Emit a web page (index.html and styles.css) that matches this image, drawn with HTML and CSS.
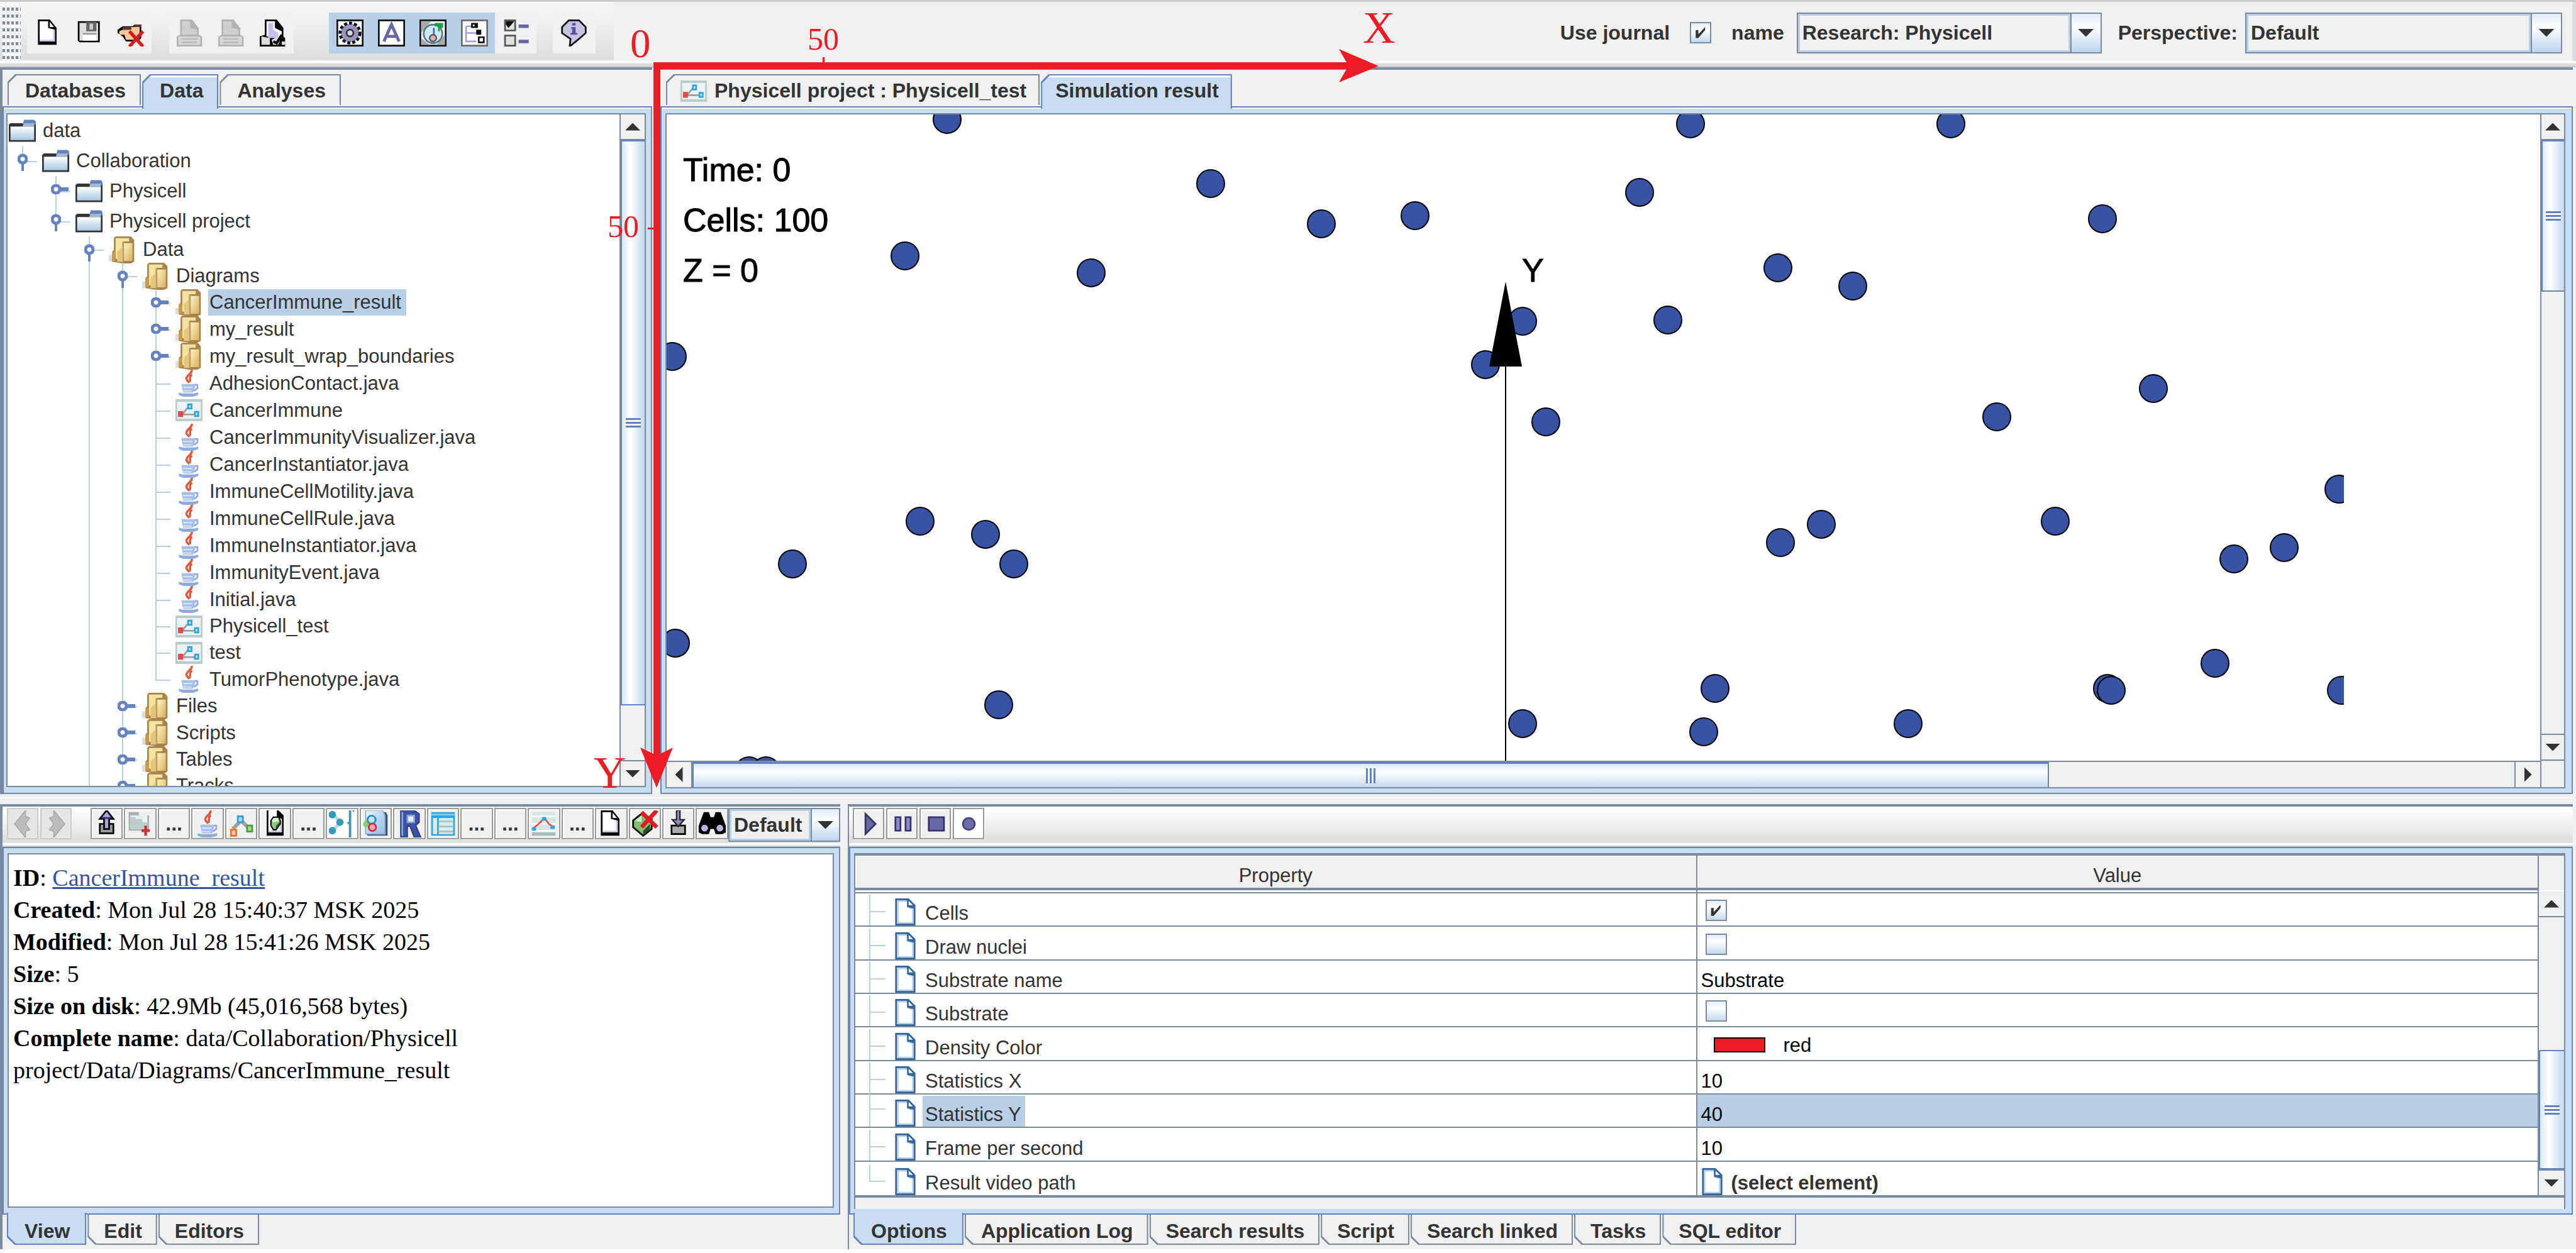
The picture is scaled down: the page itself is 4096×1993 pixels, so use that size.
FILE: index.html
```html
<!DOCTYPE html>
<html lang="en">
<head>
<meta charset="utf-8">
<title>Research: Physicell</title>
<link rel="stylesheet" href="styles.css">
</head>
<body>
<svg class="defs" aria-hidden="true">
  <defs>
    <linearGradient id="gold" x1="0" y1="0" x2="1" y2="1"><stop offset="0" stop-color="#fdf3c0"/><stop offset="1" stop-color="#d9b060"/></linearGradient>
    <linearGradient id="sky" x1="0" y1="0" x2="0" y2="1"><stop offset="0" stop-color="#ffffff"/><stop offset="1" stop-color="#a9c8e4"/></linearGradient>
    <linearGradient id="img" x1="0" y1="0" x2="1" y2="1"><stop offset="0" stop-color="#e8f3fc"/><stop offset="1" stop-color="#8dbce6"/></linearGradient>
  </defs>
  <symbol id="i-new" viewBox="0 0 16 16"><path d="M2 0H9L13 5V15H2Z" fill="#000"/><path d="M3 1H8V5L12 6V13H3Z" fill="#fff"/><path d="M11 6h1v7H3v-1h8Z" fill="#c9c7e6"/><path d="M9 1.500v3h2.500Z" fill="#fff"/></symbol>
  <symbol id="i-save" viewBox="0 0 16 16"><path d="M1 1h13v12.500H2L1 12.500Z" fill="#000"/><path d="M2 2h11v10.500H2Z" fill="#ddd"/><path d="M6 1.500h6V7H6Z" fill="#666"/><path d="M8 2.500h2v3.500H8Z" fill="#ccc"/><path d="M4 8h8v1H4Z" fill="#999"/><path d="M4 9h8v3.500H4Z" fill="#fff"/></symbol>
  <symbol id="i-trash" viewBox="0 0 16 16"><path d="M3 4h6l1-1h4v8l-2 2H5L3 10 0 8V6Z" fill="#000"/><path d="M4 4.500h6V3.500h3V11l-2 1H5L4 9H1V7l2-1h5V5Z" fill="#fdc796"/><path d="M3 4.500h5v1.500H3ZM10 3h4v1.500h-4Z" fill="#633"/><path d="M7 7l8 9M15 7l-8 9" stroke="#d61a20" stroke-width="2"/></symbol>
  <symbol id="i-print" viewBox="0 0 16 16"><path d="M2 0h7l4 5v4l2 1v6H0v-6l2-1Z" fill="#b3b3b3"/><path d="M3 1h5v4l4 1v3H3Z" fill="#cfcfcf"/><path d="M1 10h13v5H1Z" fill="#d6d6d6"/><path d="M3 11.500h9M3 13.500h9" stroke="#bbb"/></symbol>
  <symbol id="i-page" viewBox="0 0 16 16"><path d="M3 0h7l4 5v5l1 1v5H0v-6l3-1Z" fill="#000"/><path d="M4 1h5v4l4 2v4l-9-1Z" fill="#fff"/><path d="M5 2h3v4l3 2v3H5Z" fill="#c4c2e8"/><path d="M1 10l5 1v4H1ZM7 12l6-3-2 6H8ZM13 13h2v2h-2Z" fill="#ddd"/><path d="M8 13l2 1 3-5" stroke="#000" stroke-width="1.500" fill="none"/></symbol>
  <symbol id="i-gear" viewBox="0 0 16 16"><path d="M0 0h16v16H0Z" fill="#111"/><path d="M1 1h14v14H1Z" fill="#fff"/><circle cx="8" cy="8" r="5.500" fill="#9795bd" stroke="#111" stroke-width="2.500" stroke-dasharray="1.700 1.100"/><circle cx="8" cy="8" r="5" fill="#9795bd"/><circle cx="8" cy="8" r="2" fill="#d9d8ee" stroke="#333"/></symbol>
  <symbol id="i-text" viewBox="0 0 16 16"><path d="M0 0h16v16H0Z" fill="#111"/><path d="M1 1h14v14H1Z" fill="#fff"/><path d="M3.500 13L8 3l4.500 10M5.500 10h5" stroke="#6866a3" stroke-width="1.800" fill="none"/></symbol>
  <symbol id="i-dna" viewBox="0 0 16 16"><path d="M0 0h16v16H0Z" fill="#111"/><path d="M1 1h14v14H1Z" fill="#fff"/><path d="M1 1h6L1 8ZM10 15h5V9ZM1 11v4h5Z" fill="#aaa"/><circle cx="8" cy="8.500" r="5.500" fill="#cceaf2" stroke="#578" stroke-width="1"/><path d="M9 2h5v3h-2v2h-1V4H9Z" fill="#1aa04a"/><path d="M8 5h1v5H8Z" fill="#3a64b0"/><circle cx="8" cy="11" r="2" fill="#f0a7a4" stroke="#456" stroke-width=".8"/></symbol>
  <symbol id="i-tree" viewBox="0 0 16 16"><path d="M0 0h16v16H0Z" fill="#6a6a6a"/><path d="M1 1h14v14H1Z" fill="#fff"/><path d="M3 4v9h6M3 8h6M3 4h4" stroke="#a3a1d5" fill="none"/><path d="M6 2h4v3H6ZM9 6h3v3H9ZM10 10h4v4h-4Z" fill="#111"/><path d="M7 3h1v1H7ZM11 11h2v2h-2Z" fill="#fff"/></symbol>
  <symbol id="i-list" viewBox="0 0 16 16"><path d="M1 0h7v7H1ZM1 9h7v7H1Z" fill="#555"/><path d="M2 1h5v5H2ZM2 10h5v5H2Z" fill="#dfe3df"/><path d="M2 1h5L3.500 5 2 3Z" fill="#111"/><path d="M9.500 3h6v2h-6ZM9.500 12h6v2h-6Z" fill="#6866a3"/></symbol>
  <symbol id="i-info" viewBox="0 0 16 16"><path d="M5 .5h6l4 4v3.500l-4 3.500-5.500 4.500.5-4.500L1 8V4.500Z" fill="#c5c3e0" stroke="#111" stroke-width="1"/><path d="M7 2h2v1.500H7ZM6.500 4.500H9V8h1v1H6V8h1V5.500h-.5Z" fill="#55539a"/></symbol>
  <symbol id="i-left" viewBox="0 0 16 16"><path d="M9.500 0L3 8l6.500 8v-3.500l2.500-1L9.500 8 12 4.500 9.500 3.500Z" fill="#bcbcbc" stroke="#aaa" stroke-width=".6"/></symbol>
  <symbol id="i-right" viewBox="0 0 16 16"><path d="M6.500 0L13 8l-6.500 8v-3.500L4 11.500 6.500 8 4 4.500l2.500-1Z" fill="#bcbcbc" stroke="#aaa" stroke-width=".6"/></symbol>
  <symbol id="i-up" viewBox="0 0 16 16"><path d="M4 8h8v5.500H4Z" fill="#999" stroke="#000"/><path d="M8 0l4 5H9.500v6h-3V5H4Z" fill="#a8a6d8" stroke="#000"/><path d="M5 4.500h6" stroke="#33306a" stroke-width="1"/></symbol>
  <symbol id="i-folder-add" viewBox="0 0 16 16"><path d="M1 1h6v2h6v9H1Z" fill="#a5b1b1"/><path d="M2 3h10v8H2Z" fill="#e9f0f0"/><path d="M2 4h3v1h4v2h3v4H2Z" fill="#bfcccc"/><path d="M11 9v6M8.500 12h5" stroke="#c93036" stroke-width="1.600"/></symbol>
  <symbol id="i-java" viewBox="0 0 16 16"><path d="M9.500 0C10.500 2 6 3.500 6.500 5.500 6.700 6.500 8 7 7.500 7.800M9.800 3C7.500 4.500 9.500 5.500 8.300 7.300" stroke="#e0573c" stroke-width="1.300" fill="none"/><path d="M3.500 8.500h8v2l-1 3h-6Z" fill="#a5bfe8"/><path d="M11.500 9h1.500v2l-2 1.500" stroke="#8faadb" fill="none"/><path d="M2 13.500l2 .5h7l2.500-.5v1.500l-3 1h-6l-2.500-1Z" fill="#8faadb"/><path d="M4.500 10.500h5.500M4.500 12.500h5" stroke="#dfe8f6" stroke-width=".7"/></symbol>
  <symbol id="i-graph" viewBox="0 0 16 16"><path d="M3 11l5-5 5 5" stroke="#97a3a3" stroke-width="2.200" fill="none"/><path d="M6 3.500h3v3.500H6Z" fill="#a9dcf2" stroke="#2a9fd8"/><path d="M2 11.500h3v3.500H2Z" fill="#fbd3ba" stroke="#f06a24"/><path d="M11.500 9h3v3.500h-3Z" fill="#a9d77c" stroke="#3aa04a"/></symbol>
  <symbol id="i-docflask" viewBox="0 0 16 16"><path d="M3 0h7l3 3v12H3Z" fill="#000"/><path d="M4 0h5v4l3 1v8H4Z" fill="#fff"/><path d="M11 6h1v7H4v-1h7Z" fill="#c9c7e6"/><path d="M5.500 6L7 4h3l1 2v2L8.500 11.500H7L5.500 9Z" fill="#8cc97c" stroke="#000" stroke-width=".8"/><path d="M6 6l1-1.500h3V6.500L7 7Z" fill="#dcefd6"/><path d="M10.500 7v1.500L8.500 11V9Z" fill="#2b5e2b"/></symbol>
  <symbol id="i-net" viewBox="0 0 16 16"><path d="M-1-1h18v18H-1Z" fill="#fff"/><path d="M3 3l4 4-4 4" stroke="#b5d9e6" stroke-width="2" fill="none"/><circle cx="2" cy="2.500" r="2.200" fill="#349ab9"/><circle cx="6.500" cy="7" r="2.200" fill="#349ab9"/><circle cx="2" cy="12" r="2.200" fill="#349ab9"/><path d="M12.500 0v16M14 0h1M11 7.500h2" stroke="#349ab9" stroke-width="1.400"/></symbol>
  <symbol id="i-img" viewBox="0 0 16 16"><path d="M3 1h11l1 2v12H3Z" fill="#3c5372"/><path d="M2 0h10l1.500 3v11H2Z" fill="url(#img)" stroke="#8aa8c8" stroke-width=".6"/><circle cx="2.500" cy="8" r="2" fill="#8fcf6a"/><circle cx="5.500" cy="5.500" r="2.400" fill="#bfe3f7" stroke="#1e90d2"/><circle cx="6" cy="10" r="2.200" fill="#f2a7b0" stroke="#d42a40"/></symbol>
  <symbol id="i-r" viewBox="0 0 16 16"><path d="M3 0h8l3 2v5l-2 2 3 7h-4L8.500 9.500H7V16H3Z" fill="#3a53a4" stroke="#27357e" stroke-width=".6"/><path d="M4 1v14M7 3h4v4H7Z" stroke="#86a5dc" stroke-width="1" fill="#eee"/></symbol>
  <symbol id="i-table" viewBox="0 0 16 16"><path d="M1 1h14v14H1Z" fill="#2aa5df"/><path d="M2 4.500h2.500V14H2ZM5.500 4.500H14V14H5.500Z" fill="#d8eaee"/><path d="M5.500 6.500H14M5.500 9.500H14M5.500 12.500H14" stroke="#a9c2c2"/><path d="M1 2.500h14" stroke="#8ad0ee"/></symbol>
  <symbol id="i-plot" viewBox="0 0 16 16"><path d="M1 1h14v14H1Z" fill="#d6e6e6"/><path d="M1 3.500h14M1 8h14M1 12h14" stroke="#fff"/><path d="M1 14h14" stroke="#a9bcbc" stroke-width="2"/><path d="M2 10.500L5 8l3.500-3.500L11 8l3 2" stroke="#f04a3c" fill="none"/><path d="M1 10h2.500v2H1ZM7 4h2.500v2H7ZM12 9h2.500v2H12Z" fill="#2aa5df"/></symbol>
  <symbol id="i-flaskx" viewBox="0 0 16 16"><path d="M1 6l5-4 6 3v6l-5 4-6-5Z" fill="#7fbf70" stroke="#000"/><path d="M7 12l4-4v3l-4 4Z" fill="#245224"/><path d="M2 6l4-3v4Z" fill="#d5efcc"/><path d="M6 1l9 9M15 0L6 10" stroke="#e01c22" stroke-width="2.400"/></symbol>
  <symbol id="i-down" viewBox="0 0 16 16"><path d="M4 9h8v5H4Z" fill="#aaa" stroke="#000"/><path d="M8 9.500L4.500 5.500H7V0h2v5.500h2.500Z" fill="#8c8ac8" stroke="#222" stroke-width=".8"/></symbol>
  <symbol id="i-find" viewBox="0 0 16 16"><path d="M3 1h3l1 3h2l1-3h3l3 8v4l-2 1h-4l-1-3H7l-1 3H2l-2-1V9Z" fill="#000"/><circle cx="3.500" cy="10.500" r="2" fill="#b9b7e2"/><circle cx="12.500" cy="10.500" r="2" fill="#b9b7e2"/></symbol>
  <symbol id="i-disk-folder" viewBox="0 0 16 13"><path d="M9 0h6l1 1v3H8Z" fill="#6382bf"/><path d="M0 3l1-1h7l1 1h7v10H0Z" fill="#333"/><path d="M1 4h14v8H1Z" fill="url(#sky)"/><path d="M9 2h6v2H8Z" fill="#a3b8d0"/></symbol>
  <symbol id="i-folder" viewBox="0 0 16 16"><path d="M0 11h3v4H0Z" fill="#ddd"/><path d="M3 1l1-1h9l2 2v13l-2 1H8l-6-1V9l1-1Z" fill="#a8834a"/><path d="M4 1h8v2H8v12l-4-2Z" fill="#f4e2a0"/><path d="M2 9h2v5.500H2Z" fill="#c79b4a"/><path d="M9 4h5v10.500H9Z" fill="url(#gold)"/><path d="M5 9l3-3v9H5Z" fill="#e3c67c"/><path d="M8.500 3v12" stroke="#c8a264" stroke-width=".6"/></symbol>
  <symbol id="i-diagram" viewBox="0 0 16 13"><path d="M0 0h16v13H0Z" fill="#b9cccb"/><path d="M1 1.500h14v10H1Z" fill="#eaf2f3"/><path d="M4 9l4-5M4 9h8" stroke="#999" fill="none"/><path d="M7 2.500h3V6H7ZM11 7h3v3.500h-3Z" fill="#2aa5df"/><path d="M1.500 7h3v3.500h-3Z" fill="#e8474c"/><path d="M8 3.500h1V5H8ZM12 8h1v1.500h-1Z" fill="#bfe6f7"/></symbol>
  <symbol id="i-leaf" viewBox="0 0 16 16"><path d="M2 0h8l4 4v12H2Z" fill="#31659c"/><path d="M3 1h6v4l4 1v9H3Z" fill="#b8cfe5"/><path d="M4 2h5v3.500l3 1V14H4Z" fill="#fff"/><path d="M10 1.500V4h2.500Z" fill="#fff"/></symbol>
</svg>

<header class="topbar">
  <div class="tools">
    <span class="grip"></span>
    <div class="group">
      <button class="tool" aria-label="New"><svg><use href="#i-new"/></svg></button>
      <button class="tool" aria-label="Save"><svg><use href="#i-save"/></svg></button>
      <button class="tool" aria-label="Remove"><svg><use href="#i-trash"/></svg></button>
    </div>
    <div class="group g2">
      <button class="tool" aria-label="Print" disabled><svg><use href="#i-print"/></svg></button>
      <button class="tool" aria-label="Print preview" disabled><svg><use href="#i-print"/></svg></button>
      <button class="tool" aria-label="Page setup"><svg><use href="#i-page"/></svg></button>
    </div>
    <div class="group g3">
      <button class="tool on" aria-label="Kernel"><svg><use href="#i-gear"/></svg></button>
      <button class="tool on" aria-label="Titles"><svg><use href="#i-text"/></svg></button>
      <button class="tool on" aria-label="Biology"><svg><use href="#i-dna"/></svg></button>
      <button class="tool on" aria-label="Structure"><svg><use href="#i-tree"/></svg></button>
      <button class="tool" aria-label="List"><svg><use href="#i-list"/></svg></button>
    </div>
    <div class="group g4">
      <button class="tool" aria-label="Help"><svg><use href="#i-info"/></svg></button>
    </div>
  </div>
  <form class="session">
    <label for="journal-on">Use journal</label>
    <input class="check" type="checkbox" id="journal-on" checked>
    <label for="journal">name</label>
    <div class="combo journal"><select id="journal"><option>Research: Physicell</option></select><span class="drop"></span></div>
    <label for="perspective">Perspective:</label>
    <div class="combo perspective"><select id="perspective"><option>Default</option></select><span class="drop"></span></div>
  </form>
</header>

<main class="desk">
  <div class="upper">
    <section class="pane repo">
      <nav class="tabs">
        <button class="tab">Databases</button><button class="tab sel">Data</button><button class="tab">Analyses</button>
      </nav>
      <div class="frame">
        <div class="inner row">
          <div class="tree">
            <div class="node big"><svg><use href="#i-disk-folder"/></svg><span>data</span></div>
            <ul>
              <li><div class="node big open"><svg><use href="#i-disk-folder"/></svg><span>Collaboration</span></div>
                <ul>
                  <li><div class="node big closed"><svg><use href="#i-disk-folder"/></svg><span>Physicell</span></div></li>
                  <li><div class="node big open"><svg><use href="#i-disk-folder"/></svg><span>Physicell project</span></div>
                    <ul>
                      <li class="more"><div class="node dir open"><svg><use href="#i-folder"/></svg><span>Data</span></div>
                        <ul>
                          <li><div class="node dir open"><svg><use href="#i-folder"/></svg><span>Diagrams</span></div>
                            <ul>
                              <li><div class="node dir closed"><svg><use href="#i-folder"/></svg><span class="picked">CancerImmune_result</span></div></li>
                              <li><div class="node closed"><svg><use href="#i-folder"/></svg><span>my_result</span></div></li>
                              <li><div class="node closed"><svg><use href="#i-folder"/></svg><span>my_result_wrap_boundaries</span></div></li>
                              <li><div class="node"><svg><use href="#i-java"/></svg><span>AdhesionContact.java</span></div></li>
                              <li><div class="node"><svg><use href="#i-diagram"/></svg><span>CancerImmune</span></div></li>
                              <li><div class="node"><svg><use href="#i-java"/></svg><span>CancerImmunityVisualizer.java</span></div></li>
                              <li><div class="node"><svg><use href="#i-java"/></svg><span>CancerInstantiator.java</span></div></li>
                              <li><div class="node"><svg><use href="#i-java"/></svg><span>ImmuneCellMotility.java</span></div></li>
                              <li><div class="node"><svg><use href="#i-java"/></svg><span>ImmuneCellRule.java</span></div></li>
                              <li><div class="node"><svg><use href="#i-java"/></svg><span>ImmuneInstantiator.java</span></div></li>
                              <li><div class="node"><svg><use href="#i-java"/></svg><span>ImmunityEvent.java</span></div></li>
                              <li><div class="node"><svg><use href="#i-java"/></svg><span>Initial.java</span></div></li>
                              <li><div class="node dir"><svg><use href="#i-diagram"/></svg><span>Physicell_test</span></div></li>
                              <li><div class="node dir"><svg><use href="#i-diagram"/></svg><span>test</span></div></li>
                              <li><div class="node"><svg><use href="#i-java"/></svg><span>TumorPhenotype.java</span></div></li>
                            </ul>
                          </li>
                          <li><div class="node dir closed"><svg><use href="#i-folder"/></svg><span>Files</span></div></li>
                          <li><div class="node closed"><svg><use href="#i-folder"/></svg><span>Scripts</span></div></li>
                          <li><div class="node dir closed"><svg><use href="#i-folder"/></svg><span>Tables</span></div></li>
                          <li><div class="node dir closed"><svg><use href="#i-folder"/></svg><span>Tracks</span></div></li>
                        </ul>
                      </li>
                    </ul>
                  </li>
                </ul>
              </li>
            </ul>
          </div>
          <div class="vbar s-tree"><span class="arrow a-up"></span><span class="track"><i class="thumb"></i></span><span class="arrow a-down"></span></div>
        </div>
      </div>
    </section>

    <section class="pane docs">
      <nav class="tabs">
        <button class="tab with-icon"><svg><use href="#i-diagram"/></svg>Physicell project : Physicell_test</button><button class="tab sel">Simulation result</button>
      </nav>
      <div class="frame">
        <div class="inner docgrid">
          <div class="view">
            <svg class="sim" width="2667" height="1028" viewBox="1060 182 2667 1028">
              <g class="cells">
                <circle cx="1506" cy="190" r="22"/><circle cx="1925" cy="292" r="22"/><circle cx="2101" cy="356" r="22"/><circle cx="1439" cy="407" r="22"/><circle cx="1735" cy="434" r="22"/>
                <circle cx="1069" cy="567" r="22"/><circle cx="1463" cy="829" r="22"/><circle cx="1567" cy="850" r="22"/><circle cx="1260" cy="897" r="22"/><circle cx="1612" cy="897" r="22"/>
                <circle cx="1074" cy="1023" r="22"/><circle cx="1588" cy="1121" r="22"/><circle cx="1191" cy="1226" r="22"/><circle cx="1218" cy="1226" r="22"/>
                <circle cx="2688" cy="197" r="22"/><circle cx="3102" cy="197" r="22"/><circle cx="2607" cy="306" r="22"/><circle cx="2250" cy="343" r="22"/><circle cx="3343" cy="348" r="22"/>
                <circle cx="2827" cy="426" r="22"/><circle cx="2946" cy="455" r="22"/><circle cx="2652" cy="509" r="22"/><circle cx="2421" cy="511" r="22"/><circle cx="2362" cy="580" r="22"/>
                <circle cx="2458" cy="671" r="22"/><circle cx="3424" cy="618" r="22"/><circle cx="3175" cy="663" r="22"/><circle cx="3719" cy="778" r="22"/><circle cx="3268" cy="829" r="22"/>
                <circle cx="2896" cy="834" r="22"/><circle cx="2831" cy="863" r="22"/><circle cx="3632" cy="871" r="22"/><circle cx="3552" cy="889" r="22"/><circle cx="3522" cy="1055" r="22"/>
                <circle cx="2727" cy="1095" r="22"/><circle cx="3351" cy="1095" r="22"/><circle cx="3357" cy="1098" r="22"/><circle cx="3723" cy="1098" r="22"/><circle cx="2421" cy="1151" r="22"/>
                <circle cx="3034" cy="1151" r="22"/><circle cx="2709" cy="1164" r="22"/>
              </g>
              <path d="M2394 448L2420 583H2368Z" fill="#000"/>
              <path d="M2394 560V1210" stroke="#000" stroke-width="2"/>
              <text x="2420" y="448">Y</text>
              <text x="1086" y="288">Time: 0</text>
              <text x="1086" y="368">Cells: 100</text>
              <text x="1086" y="448">Z = 0</text>
            </svg>
          </div>
          <div class="vbar s-docv"><span class="arrow a-up"></span><span class="track"><i class="thumb"></i></span><span class="arrow a-down"></span></div>
          <div class="hbar"><span class="arrow a-left"></span><span class="track"><i class="thumb"></i></span><span class="arrow a-right"></span></div>
          <div class="corner"></div>
        </div>
      </div>
    </section>
  </div>

  <div class="lower">
    <section class="pane info">
      <div class="strip">
        <div class="nav">
          <button class="mini off" aria-label="Back" disabled><svg><use href="#i-left"/></svg></button>
          <button class="mini off" aria-label="Forward" disabled><svg><use href="#i-right"/></svg></button>
        </div>
        <div class="minis">
          <button class="mini" aria-label="Up"><svg><use href="#i-up"/></svg></button>
          <button class="mini" aria-label="New folder"><svg><use href="#i-folder-add"/></svg></button>
          <button class="mini">...</button>
          <button class="mini" aria-label="New Java file"><svg><use href="#i-java"/></svg></button>
          <button class="mini" aria-label="New diagram"><svg><use href="#i-graph"/></svg></button>
          <button class="mini" aria-label="New experiment"><svg><use href="#i-docflask"/></svg></button>
          <button class="mini">...</button>
          <button class="mini" aria-label="New network"><svg><use href="#i-net"/></svg></button>
          <button class="mini" aria-label="New image"><svg><use href="#i-img"/></svg></button>
          <button class="mini" aria-label="New R script"><svg><use href="#i-r"/></svg></button>
          <button class="mini" aria-label="New table"><svg><use href="#i-table"/></svg></button>
          <button class="mini">...</button>
          <button class="mini">...</button>
          <button class="mini" aria-label="New plot"><svg><use href="#i-plot"/></svg></button>
          <button class="mini">...</button>
          <button class="mini" aria-label="New document"><svg><use href="#i-new"/></svg></button>
          <button class="mini" aria-label="Remove element"><svg><use href="#i-flaskx"/></svg></button>
          <button class="mini" aria-label="Import"><svg><use href="#i-down"/></svg></button>
          <button class="mini" aria-label="Find"><svg><use href="#i-find"/></svg></button>
        </div>
        <div class="combo short"><select aria-label="View mode"><option>Default</option></select><span class="drop"></span></div>
      </div>
      <div class="frame">
        <div class="inner text">
          <p><b>ID</b>: <a href="#CancerImmune_result">CancerImmune_result</a></p>
          <p><b>Created</b>: Mon Jul 28 15:40:37 MSK 2025</p>
          <p><b>Modified</b>: Mon Jul 28 15:41:26 MSK 2025</p>
          <p><b>Size</b>: 5</p>
          <p><b>Size on disk</b>: 42.9Mb (45,016,568 bytes)</p>
          <p><b>Complete name</b>: data/Collaboration/Physicell<br>project/Data/Diagrams/CancerImmune_result</p>
        </div>
      </div>
      <nav class="tabs bottom">
        <button class="tab sel">View</button><button class="tab">Edit</button><button class="tab">Editors</button>
      </nav>
    </section>

    <section class="pane props">
      <div class="strip">
        <div class="player">
          <button class="mini" aria-label="Play"><svg viewBox="0 0 16 16"><path d="M6 2l6 6-6 6Z" fill="#6866a3" stroke="#33306a"/></svg></button>
          <button class="mini" aria-label="Pause"><svg viewBox="0 0 16 16"><path d="M4 4h3v8H4ZM10 4h3v8h-3Z" fill="#8c8ac8" stroke="#33306a"/></svg></button>
          <button class="mini" aria-label="Stop"><svg viewBox="0 0 16 16"><path d="M4 4h9v8H4Z" fill="#6866a3" stroke="#33306a"/></svg></button>
          <button class="mini lit" aria-label="Record"><svg viewBox="0 0 16 16"><circle cx="8" cy="8" r="3.500" fill="#6a6fa8" stroke="#4b3f8a"/></svg></button>
        </div>
      </div>
      <div class="frame">
        <div class="inner row grid">
          <table>
            <colgroup><col class="half"><col class="half"></colgroup>
            <thead><tr><th>Property</th><th>Value</th></tr></thead>
            <tbody>
              <tr class="cut"><td></td><td></td></tr>
              <tr><td><div class="prop"><svg><use href="#i-leaf"/></svg><span>Cells</span></div></td><td><input class="check" type="checkbox" aria-label="Cells" checked></td></tr>
              <tr><td><div class="prop"><svg><use href="#i-leaf"/></svg><span>Draw nuclei</span></div></td><td><input class="check" type="checkbox" aria-label="Draw nuclei"></td></tr>
              <tr><td><div class="prop"><svg><use href="#i-leaf"/></svg><span>Substrate name</span></div></td><td><div class="val">Substrate</div></td></tr>
              <tr><td><div class="prop"><svg><use href="#i-leaf"/></svg><span>Substrate</span></div></td><td><input class="check" type="checkbox" aria-label="Substrate"></td></tr>
              <tr><td><div class="prop"><svg><use href="#i-leaf"/></svg><span>Density Color</span></div></td><td><div class="val color"><i></i>red</div></td></tr>
              <tr><td><div class="prop"><svg><use href="#i-leaf"/></svg><span>Statistics X</span></div></td><td><div class="val">10</div></td></tr>
              <tr class="current"><td><div class="prop"><svg><use href="#i-leaf"/></svg><span>Statistics Y</span></div></td><td><div class="val">40</div></td></tr>
              <tr><td><div class="prop"><svg><use href="#i-leaf"/></svg><span>Frame per second</span></div></td><td><div class="val">10</div></td></tr>
              <tr><td><div class="prop last"><svg><use href="#i-leaf"/></svg><span>Result video path</span></div></td><td><div class="val pick"><svg><use href="#i-leaf"/></svg><b>(select element)</b></div></td></tr>
            </tbody>
          </table>
          <div class="vbar s-props"><span class="arrow a-up"></span><span class="track"><i class="thumb"></i></span><span class="arrow a-down"></span></div>
        </div>
      </div>
      <nav class="tabs bottom">
        <button class="tab sel">Options</button><button class="tab">Application Log</button><button class="tab">Search results</button><button class="tab">Script</button><button class="tab">Search linked</button><button class="tab">Tasks</button><button class="tab">SQL editor</button>
      </nav>
    </section>
  </div>
</main>

<svg class="axes" width="2240" height="1270" viewBox="0 0 2240 1270" aria-label="Coordinate axes">
  <path d="M1039 99H2141L2129 78L2192 105L2129 131L2141 110H1050V1199L1070 1189L1044 1253L1018 1189L1039 1199Z"/>
  <path d="M1308 91h3v9h-3ZM1030 362h10v3h-10Z"/>
  <text x="1002" y="91" class="zero">0</text>
  <text x="1284" y="79" class="mark">50</text>
  <text x="966" y="377" class="mark">50</text>
  <text x="2167" y="68" class="axis">X</text>
  <text x="944" y="1253" class="axis">Y</text>
</svg>
</body>
</html>
```
FILE: styles.css
```css
:root {
  --panel: #f0f0f0;
  --line: #7b8a9c;
  --blue: #6382bf;
  --pale: #c8ddf2;
  --pick: #b8cfe5;
  --ink: #333;
}
* { box-sizing: border-box; }
body {
  margin: 0;
  height: 100vh;
  display: flex;
  flex-direction: column;
  overflow: hidden;
  position: relative;
  background: var(--panel);
  color: var(--ink);
  font: bold 32px "Liberation Sans", Arial, sans-serif;
}
button, select, input { font: inherit; color: inherit; margin: 0; }
button { border: 0; padding: 0; background: none; }
p, ul { margin: 0; padding: 0; list-style: none; }
.defs { position: absolute; width: 0; height: 0; }

/* top toolbar */
.topbar {
  flex: none;
  height: 107px;
  display: flex;
  border-top: 3px solid #ccc;
  border-bottom: 2px solid #ccc;
  background: linear-gradient(#f6f6f6, #eceeed 40%, #dcdddc 92px, #fff 94px, #fff 97px, #ddd 98px);
}
.tools { flex: 0 0 976px; display: flex; align-items: center; padding: 0 0 4px 4px; }
.grip {
  width: 29px;
  height: 93px;
  margin-right: 10px;
  background:
    repeating-linear-gradient(90deg, transparent 0 4px, var(--panel) 4px 7px),
    repeating-linear-gradient(#fff 0 6px, var(--line) 6px 11px);
}
.group { display: flex; height: 65px; background: var(--panel); margin-bottom: -1px; }
.g2 { margin-left: 28px; }
.g3 { margin-left: 56px; }
.g4 { width: 68px; margin-left: 26px; }
.tool { width: 66px; display: grid; place-items: center; }
.tool.on { background: var(--pick); }
.tool svg, .mini svg { width: 43px; height: 43px; display: block; }
.session {
  flex: 1;
  display: flex;
  align-items: center;
  justify-content: flex-end;
  margin-bottom: 8px;
  padding-top: 4px;
  padding-right: 16px;
  border-right: 6px solid #ddd;
  background: var(--panel);
}
.session .check { margin: 0 32px; }
.session .combo { margin: 0 0 0 20px; }
.session .perspective { margin-left: 12px; }
.session .journal { margin-right: 26px; }
.check {
  appearance: none;
  width: 34px;
  height: 34px;
  display: block;
  border: 2px solid var(--line);
  background: linear-gradient(#e4eefa, #fff 35%, #c5d9ec);
}
.check:checked::after {
  content: "";
  display: block;
  width: 30px;
  height: 30px;
  background: var(--ink);
  clip-path: polygon(24% 36%, 38% 36%, 38% 58%, 74% 20%, 74% 36%, 38% 78%, 24% 78%);
}
.combo {
  display: flex;
  height: 65px;
  border: 2px solid var(--line);
}
.combo select {
  appearance: none;
  flex: 1;
  min-width: 0;
  border: 3px solid var(--pick);
  border-radius: 0;
  padding: 0 4px;
  background: var(--panel);
  outline: 0;
}
.journal { width: 485px; }
.perspective { width: 504px; }
.drop {
  flex: 0 0 48px;
  display: grid;
  place-items: center;
  border-left: 2px solid var(--line);
  background: linear-gradient(#dfeaf7, #fff 35%, #bcd3ea);
}
.drop::after {
  content: "";
  width: 26px;
  height: 13px;
  background: var(--ink);
  clip-path: polygon(0 0, 100% 0, 50% 100%);
}

/* split layout */
.desk { flex: 1; min-height: 0; display: flex; flex-direction: column; padding-right: 5px; border-bottom: 6px solid #fff; }
.upper { flex: 1156 1 0; min-height: 0; display: grid; grid-template-columns: 1037fr 3041fr; gap: 13px; }
.lower { flex: 708 1 0; min-height: 0; display: grid; grid-template-columns: 1336fr 2743fr; gap: 12px; margin-top: 16px; }
.lower { box-shadow: 0 -10px 0 -1px var(--panel), 0 -12px 0 -1px #fff; }
.pane { min-width: 0; min-height: 0; display: flex; flex-direction: column; border-top: 4px solid var(--line); background: var(--panel); }
.repo, .info { border-left: 4px solid var(--line); }
.props { border-left: 2px solid var(--line); }
.lower .pane { padding-bottom: 7px; }

.tabs { display: flex; gap: 2px; padding: 7px 8px 2px; }
.docs .tabs { padding-left: 9px; }
.tab {
  position: relative;
  isolation: isolate;
  height: 49px;
  display: flex;
  align-items: center;
  padding: 4px 24px 0 28px;
  white-space: nowrap;
  background: var(--line);
  clip-path: polygon(12px 0, 100% 0, 100% 100%, 0 100%, 0 12px);
}
.tab::before {
  content: "";
  position: absolute;
  z-index: -1;
  inset: 2px 2px 0 2px;
  background: var(--panel);
  clip-path: polygon(12px 0, 100% 0, 100% 100%, 0 100%, 0 12px);
}
.tab.sel { height: 55px; margin-bottom: -6px; padding-bottom: 6px; background: var(--blue); z-index: 1; }
.tab.sel::before { background: linear-gradient(#fff 3px, var(--pale) 3px); }
.tab svg { width: 42px; height: 34px; margin-right: 12px; }
.docs .tab { padding-left: 23px; padding-right: 21px; }
.tabs.bottom { padding: 0 7px; }
.bottom .tab, .bottom .tab::before { clip-path: polygon(0 0, 100% 0, 100% 100%, 12px 100%, 0 calc(100% - 12px)); }
.bottom .tab::before { inset: 0 2px 2px 2px; }
.bottom .tab { height: 48px; padding: 4px 24px 0 26px; }
.bottom .tab.sel { height: 51px; margin: -3px 0 0; padding: 7px 26px 0 28px; }
.bottom .tab.sel::before { background: var(--pale); }

.frame {
  flex: 1;
  min-height: 0;
  display: flex;
  padding: 9px 8px 9px 4px;
  border: 2px solid var(--blue);
  border-right-color: var(--line);
  border-bottom-color: var(--line);
  background: var(--pale);
  box-shadow: inset 0 2px #fff;
}
.inner { flex: 1; min-width: 0; border: 2px solid var(--line); background: #fff; overflow: hidden; }
.row { display: flex; }
.docs .frame { padding-left: 6px; padding-right: 10px; padding-bottom: 7px; }
.lower .frame { border-bottom-color: var(--blue); box-shadow: none; }

/* scroll bars */
.vbar { flex: 0 0 40px; display: flex; flex-direction: column; border-left: 2px solid var(--line); background: var(--panel); }
.vbar .arrow { flex: 0 0 39px; }
.arrow { display: grid; place-items: center; }
.arrow::after { content: ""; background: var(--ink); }
.a-up::after { width: 24px; height: 12px; clip-path: polygon(50% 0, 100% 100%, 0 100%); }
.a-down::after { width: 24px; height: 12px; clip-path: polygon(0 0, 100% 0, 50% 100%); }
.a-left::after { width: 12px; height: 24px; clip-path: polygon(0 50%, 100% 0, 100% 100%); }
.a-right::after { width: 12px; height: 24px; clip-path: polygon(0 0, 100% 50%, 0 100%); }
.vbar .track { flex: 1; display: grid; border: solid var(--line); border-width: 2px 0; }
.thumb {
  display: grid;
  place-items: center;
  border: 2px solid var(--blue);
  border-right: 0;
  background: linear-gradient(90deg, #dbe8f6, #fff 35%, #c5d9ee);
}
.vbar .thumb::after { content: ""; width: 24px; height: 15px; background: repeating-linear-gradient(var(--blue) 0 3px, #fff 3px 6px); }
.s-tree .thumb { grid-row: 1; }
.s-tree .track { grid-template-rows: 899fr 87fr; }
.s-docv .track { grid-template-rows: 242fr 706fr; }
.s-props .track { grid-template-rows: 213fr 191fr; }
.s-props .thumb { grid-row: 2; }
.hbar { display: flex; border-top: 2px solid var(--line); background: var(--panel); }
.hbar .arrow { flex: 0 0 39px; }
.hbar .track { flex: 1; display: grid; grid-template-columns: 2158fr 740fr; border: solid var(--line); border-width: 0 2px; }
.hbar .thumb { border: 2px solid var(--blue); border-top-width: 3px; border-bottom: 0; background: linear-gradient(#dbe8f6, #fff 35%, #c5d9ee); }
.hbar .thumb::after { content: ""; width: 15px; height: 24px; background: repeating-linear-gradient(90deg, var(--blue) 0 3px, #fff 3px 6px); }

/* repository tree */
.tree { flex: 1; min-width: 0; overflow: hidden; padding: 2px 0 0 2px; font-weight: normal; font-size: 31px; }
.tree ul { padding-left: 53px; }
.tree li { position: relative; }
.tree li::before {
  content: "";
  position: absolute;
  left: -32px;
  top: 0;
  bottom: 0;
  border-left: 2px solid var(--pick);
}
.tree li:last-child:not(.more)::before { bottom: auto; height: 22px; }
.node { position: relative; display: flex; align-items: center; height: 43px; gap: 9px; white-space: nowrap; }
.node.dir { height: 42px; }
.node.big { height: 48px; }
.node svg { flex: none; width: 43px; height: 43px; }
.node.big svg { height: 36px; }
.node span { padding: 0 8px 0 2px; line-height: 42px; }
.picked { background: var(--pick); }
li > .node::before {
  content: "";
  position: absolute;
  left: -32px;
  top: 50%;
  width: 24px;
  border-top: 2px solid var(--pick);
}
.open::after, .closed::after { content: ""; position: absolute; }
.open::after {
  left: -39px; top: 12px; width: 16px; height: 28px;
  background: radial-gradient(circle at 8px 9px, #fff 0 3px, var(--blue) 4px 8px, transparent 9px), linear-gradient(var(--blue), var(--blue)) 6px 14px / 4px 14px no-repeat;
}
.closed::after {
  left: -39px; top: 13px; width: 28px; height: 16px;
  background: radial-gradient(circle at 8px 8px, #fff 0 3px, var(--blue) 4px 8px, transparent 9px), linear-gradient(var(--blue), var(--blue)) 14px 5px / 14px 6px no-repeat;
}

/* simulation view */
.docgrid { display: grid; grid-template: minmax(0, 1fr) 42px / minmax(0, 1fr) 38px; }
.s-docv { border-bottom: 2px solid var(--line); }
.view { overflow: hidden; }
.sim { display: block; }
.sim text { font: 52px "Liberation Sans", Arial, sans-serif; fill: #000; stroke: #000; stroke-width: 1px; }
.cells circle { fill: #3953a4; stroke: #000; stroke-width: 2px; }
.corner { border-left: 2px solid var(--line); background: var(--panel); }

/* element information */
.strip {
  flex: none;
  height: 64px;
  display: flex;
  padding: 2px 0 7px 7px;
  border-bottom: 2px solid #ccc;
  background: linear-gradient(#fff, #f2f3f2 40%, #dcdedd 57px, #fff 59px, #f0f0f0);
}
.nav, .minis, .player { display: flex; gap: 3px; }
.nav { width: 133px; }
.minis { flex: 1; gap: 2px; }
.minis .mini { flex: 1 1 0; }
.mini {
  min-width: 0;
  width: 50px;
  height: 50px;
  display: grid;
  place-items: center;
  border: 2px solid #999;
  background: var(--panel);
  box-shadow: inset 2px 2px #fff, 1px 1px #fff;
}
.mini.off { border-color: #ccc; background: #e6e6e6; box-shadow: none; }
.mini.lit { background: #fff; }
.combo.short { flex: 0 0 178px; height: 54px; }
.short .drop { flex-basis: 45px; }
.info .frame { padding: 8px 8px 9px 6px; }
.text {
  padding: 12px 7px;
  color: #000;
  font: 38px/51px "Liberation Serif", "Times New Roman", serif;
}
.text a { color: #3953a4; }

/* options table */
.props .strip { padding-left: 6px; }
.props .frame { padding: 8px 10px 7px 6px; }
.grid { border-top-width: 4px; border-bottom: 0; background: var(--panel); }
.grid table { flex: 1; width: 100%; min-width: 0; height: calc(100% - 18px); table-layout: fixed; border-collapse: separate; border-spacing: 0; border-bottom: 4px solid var(--line); background: #fff; font-weight: normal; font-size: 31px; }
.half { width: 50%; }
.grid th {
  height: 55px;
  padding: 12px 0 0;
  font-weight: normal;
  background: var(--panel);
  border-right: 2px solid var(--line);
  border-bottom: 4px solid var(--line);
  box-shadow: inset 2px 2px #fff;
}
.grid td { height: 53px; padding: 0; border-right: 2px solid var(--line); border-bottom: 2px solid var(--line); vertical-align: bottom; }
.grid .cut td { height: 5px; }
.grid tr:last-child td { border-bottom: 0; }
.prop, .val { display: flex; align-items: flex-end; line-height: 39px; }
.prop { position: relative; padding-left: 58px; gap: 6px; }
.prop::before { content: ""; position: absolute; left: 22px; top: -6px; bottom: 0; border-left: 2px solid var(--pick); }
.prop.last::before { bottom: 50%; }
.prop::after { content: ""; position: absolute; left: 22px; top: 20px; width: 26px; border-top: 2px solid var(--pick); }
.prop svg, .val svg { width: 43px; height: 43px; flex: none; }
.prop span { padding: 0 6px 0 4px; }
.val { padding-left: 6px; color: #000; }
.val.pick { padding-left: 2px; gap: 9px; color: var(--ink); }
.val.color { padding-left: 26px; gap: 29px; align-items: center; padding-bottom: 4px; }
.color i { width: 82px; height: 24px; border: 2px solid #000; background: #ed1c24; }
.grid td .check { margin: 0 0 7px 13px; }
.current td + td, .current span { background: var(--pick); }
.current span { padding-top: 10px; }
.s-props { margin: 55px 0 18px; border-left: 0; border-bottom: 4px solid var(--line); border-top: 2px solid #fff; }

/* red coordinate axes drawn over the window */
.axes { position: absolute; left: 0; top: 0; fill: #ed1c24; pointer-events: none; }
.axes text { font-family: "Liberation Serif", "Times New Roman", serif; font-weight: normal; }
.zero { font-size: 65px; }
.mark { font-size: 50px; }
.axis { font-size: 71px; }
```
